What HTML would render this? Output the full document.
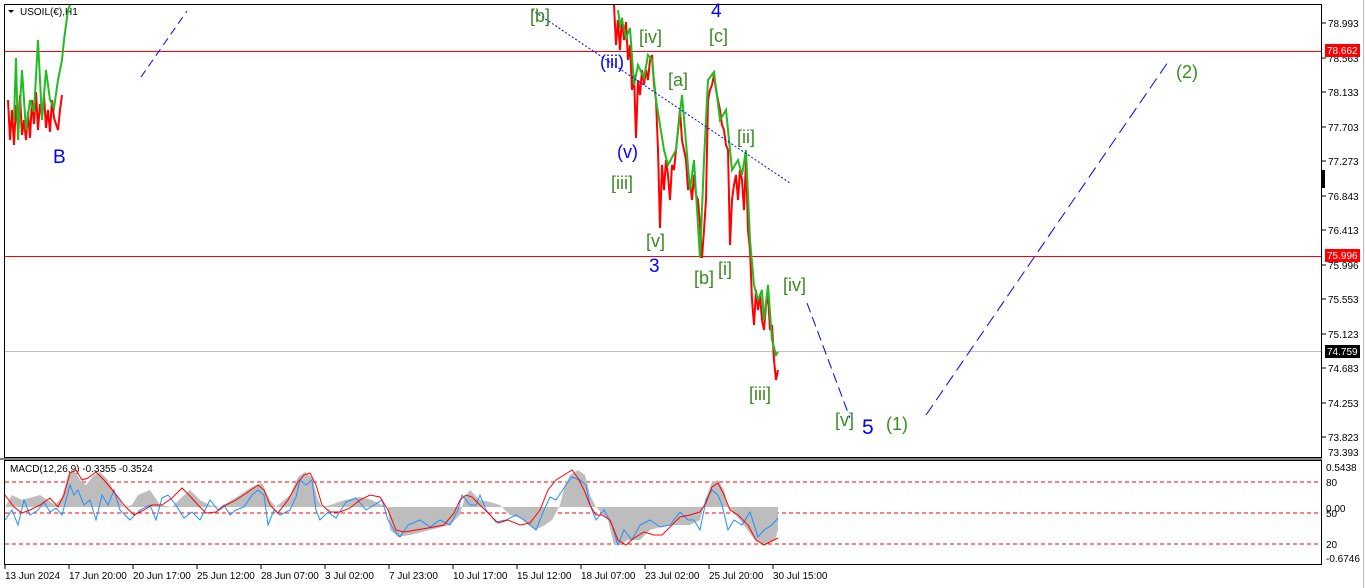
<!DOCTYPE html>
<html><head><meta charset="utf-8"><style>
html,body{margin:0;padding:0;background:#fff;width:1366px;height:588px;overflow:hidden}
svg{display:block;font-family:"Liberation Sans",sans-serif}
.g{fill:#3a8a22;font-size:18px}
.b{fill:#0000ff;font-size:19px}
.ax{font-size:10px;fill:#000}
</style></head><body>
<svg width="1366" height="588" viewBox="0 0 1366 588">
<rect x="0" y="0" width="1366" height="588" fill="#fff"/>
<!-- frames -->
<rect x="4.5" y="4.5" width="1317" height="453" fill="none" stroke="#000"/>
<rect x="4.5" y="460.5" width="1317" height="104" fill="none" stroke="#000"/>
<line x1="0" y1="459" x2="1322" y2="459" stroke="#000"/>
<line x1="1363.5" y1="0" x2="1363.5" y2="588" stroke="#bbb"/>
<!-- horizontal lines -->
<rect x="5" y="51" width="1316" height="1" fill="#ff0000"/>
<rect x="5" y="256" width="1316" height="1" fill="#ff0000"/>
<rect x="5" y="351" width="1316" height="1" fill="#c0c0c0"/>
<!-- price axis ticks & labels -->
<g stroke="#000">
<line x1="1322" y1="23" x2="1326" y2="23"/><line x1="1322" y1="58" x2="1326" y2="58"/><line x1="1322" y1="92" x2="1326" y2="92"/><line x1="1322" y1="127" x2="1326" y2="127"/><line x1="1322" y1="161" x2="1326" y2="161"/><line x1="1322" y1="196" x2="1326" y2="196"/><line x1="1322" y1="230" x2="1326" y2="230"/><line x1="1322" y1="265" x2="1326" y2="265"/><line x1="1322" y1="299" x2="1326" y2="299"/><line x1="1322" y1="334" x2="1326" y2="334"/><line x1="1322" y1="368" x2="1326" y2="368"/><line x1="1322" y1="403" x2="1326" y2="403"/><line x1="1322" y1="437" x2="1326" y2="437"/>
</g>
<g class="ax">
<text x="1328" y="27">78.993</text><text x="1328" y="62">78.563</text><text x="1328" y="96">78.133</text><text x="1328" y="131">77.703</text><text x="1328" y="165">77.273</text><text x="1328" y="200">76.843</text><text x="1328" y="234">76.413</text><text x="1328" y="269">75.996</text><text x="1328" y="303">75.553</text><text x="1328" y="338">75.123</text><text x="1328" y="372">74.683</text><text x="1328" y="407">74.253</text><text x="1328" y="441">73.823</text><text x="1328" y="456">73.393</text>
</g>
<rect x="1325" y="44" width="35" height="13" fill="#ff0000"/><text x="1327" y="54" style="fill:#fff;font-size:10px">78.662</text>
<rect x="1325" y="249" width="35" height="13" fill="#ff0000"/><text x="1327" y="259" style="fill:#fff;font-size:10px">75.996</text>
<rect x="1325" y="345" width="35" height="13" fill="#000"/><text x="1327" y="355" style="fill:#fff;font-size:10px">74.759</text>
<rect x="1322" y="170" width="3" height="18" fill="#000"/>
<!-- MACD axis -->
<g style="font-size:10px">
<text x="1326" y="471">0.5438</text><text x="1326" y="486">80</text><text x="1326" y="512">0.00</text><text x="1326" y="517">50</text><text x="1326" y="548">20</text><text x="1326" y="562">-0.6746</text>
</g>
<!-- title -->
<path d="M8 10 L14 10 L11 13 Z" fill="#000"/>
<text x="20" y="15" style="font-size:10px">USOIL(€),H1</text>
<!-- left candles -->
<g stroke-width="2" fill="none">
<polyline stroke="#ff0000" points="8,100 10,140 12,110 14,145 16,105 18,130 20,95 22,135 24,120 26,140 28,112 30,138 32,100 34,124 36,92 38,130 40,104 42,116 44,95 46,128 48,110 50,132 52,100 54,118 56,124 58,130 60,110 62,95"/>
<polyline stroke="#22bb22" points="14,120 16,58 18,140 22,70 26,130 30,100 34,112 38,40 42,120 46,70 50,100 54,108 58,80 62,60 64,40 66,25 68,10 70,5"/>
</g>
<!-- main candles -->
<g stroke-width="2" fill="none">
<polyline stroke="#ff0000" points="614,5 616,45 618,20 620,50 622,18 624,40 626,22 628,60 630,45 632,90 634,75 636,138 638,80 640,95 642,70 644,85 646,70 648,80 650,60 652,55 654,85 656,100 658,150 660,228 662,165 664,190 666,160 668,175 670,200 672,165 674,170 676,150 678,130 680,110 682,140 684,150 686,160 688,190 690,180 692,200 694,175 696,195 698,200 700,225 702,258 704,230 706,200 708,100 710,90 712,85 714,75 716,90 718,100 720,110 722,125 724,130 726,145 728,150 730,245 732,200 734,185 736,175 738,200 740,170 742,180 744,210 746,160 748,230 750,250 752,300 754,325 756,290 758,310 760,295 762,320 764,330 766,305 768,295 770,330 772,325 774,360 776,380 778,370"/>
<polyline stroke="#22bb22" points="618,10 620,25 622,20 626,38 630,28 634,85 638,65 644,78 648,55 652,60 656,100 664,150 668,165 676,150 682,95 690,190 694,160 700,258 704,160 708,80 714,72 720,120 726,110 732,170 738,160 742,175 746,150 750,240 754,285 758,300 762,290 764,320 768,285 772,340 776,355 778,352"/>
</g>
<!-- blue dashed lines -->
<g stroke="#0000ff" stroke-width="1" fill="none">
<line x1="141" y1="77" x2="187" y2="11" stroke-dasharray="8,5"/>
<line x1="532" y1="10" x2="790" y2="183" stroke-dasharray="2,2"/>
<line x1="807" y1="303" x2="850" y2="418" stroke-dasharray="10,5"/>
<line x1="926" y1="415" x2="1168" y2="62" stroke-dasharray="12,6"/>
</g>
<!-- labels -->
<text x="53" y="163" class="b">B</text>
<text x="530" y="22" class="g">[b]</text>
<text x="711" y="17" class="b">4</text>
<text x="639" y="43" class="g">[iv]</text>
<text x="709" y="42" class="g">[c]</text>
<text x="600" y="68" class="b" style="font-size:18px">(iii)</text>
<text x="668" y="86" class="g">[a]</text>
<text x="737" y="143" class="g">[ii]</text>
<text x="617" y="158" class="b" style="font-size:18px">(v)</text>
<text x="611" y="189" class="g">[iii]</text>
<text x="646" y="247" class="g">[v]</text>
<text x="649" y="272" class="b">3</text>
<text x="694" y="284" class="g">[b]</text>
<text x="718" y="275" class="g">[i]</text>
<text x="783" y="291" class="g">[iv]</text>
<text x="749" y="400" class="g">[iii]</text>
<text x="835" y="426" class="g">[v]</text>
<text x="862" y="434" class="b" style="font-size:21px">5</text>
<text x="886" y="430" class="g">(1)</text>
<text x="1176" y="78" class="g">(2)</text>
<!-- MACD -->
<text x="10" y="472" style="font-size:10px">MACD(12,26,9) -0.3355 -0.3524</text>
<g stroke="#ff0000" stroke-dasharray="4,3" stroke-width="1">
<line x1="5" y1="482" x2="1321" y2="482"/><line x1="5" y1="513" x2="1321" y2="513"/><line x1="5" y1="544" x2="1321" y2="544"/>
</g>
<polygon fill="#bdbdbd" points="5,507 12,495 22,500 40,495 55,505 62,497 68,475 74,470 80,480 86,485 94,475 100,472 108,480 116,495 124,507 132,505 138,495 150,490 160,505 172,507 182,497 190,490 200,500 210,505 220,507 240,495 250,488 262,483 270,500 276,507 290,495 298,477 305,472 312,478 318,500 322,507 330,505 345,500 360,497 372,500 382,505 388,507 390,530 398,537 410,535 430,530 450,525 460,515 462,507 465,497 470,490 480,500 490,502 500,505 505,510 510,515 520,518 535,530 545,525 552,520 560,505 565,485 570,475 578,470 585,475 590,495 596,507 608,520 614,545 620,545 628,540 640,540 650,530 660,527 670,525 690,525 700,520 705,500 712,482 718,480 724,490 728,507 740,520 755,540 765,545 775,540 778,530 778,507 5,507"/>
<polyline fill="none" stroke="#1e90ff" stroke-width="1" points="5,520 12,510 18,525 24,500 30,515 38,510 44,502 50,512 56,508 62,515 66,500 70,485 74,495 78,490 84,505 90,500 96,520 102,495 108,505 114,490 120,510 130,520 140,510 150,505 156,520 162,498 168,495 176,505 184,518 192,512 200,520 210,500 218,510 224,505 230,515 236,510 244,507 252,495 258,490 264,495 268,525 274,510 280,515 290,510 296,497 300,480 306,485 312,480 316,510 320,520 328,512 336,518 346,502 356,498 366,510 374,505 382,500 388,520 394,530 400,537 408,525 420,520 430,527 440,520 450,525 458,510 462,495 470,505 476,505 480,495 486,510 496,522 506,520 516,515 524,520 536,530 544,510 550,497 556,500 566,485 572,477 580,480 586,485 590,505 596,520 604,510 612,525 618,545 624,530 632,540 640,525 650,520 660,527 670,525 680,512 688,520 694,520 700,530 706,500 712,490 718,495 722,505 728,530 734,520 742,525 750,512 758,537 764,530 772,525 778,518"/>
<polyline fill="none" stroke="#ff0000" stroke-width="1" points="5,495 14,507 22,513 30,510 40,505 50,498 58,507 64,495 70,473 76,470 82,480 88,478 96,472 104,480 114,492 124,505 134,515 144,510 152,505 162,505 172,498 182,488 190,496 198,505 206,513 216,512 226,505 236,500 248,492 258,485 264,490 270,505 278,513 288,500 298,482 304,475 310,473 316,485 322,505 330,512 340,512 350,508 360,500 370,495 380,497 388,510 396,530 404,532 416,530 428,528 444,525 454,513 460,500 466,495 472,497 480,505 490,515 498,523 508,520 520,525 530,523 540,510 548,490 556,480 564,475 572,470 578,478 584,490 590,505 596,515 602,515 610,520 618,540 626,545 634,538 644,532 654,535 662,535 670,527 680,517 690,515 700,512 706,503 712,487 718,483 724,495 730,510 738,515 748,525 756,540 764,545 770,542 778,538"/>
<!-- time axis -->
<g stroke="#000"><line x1="5" y1="565" x2="5" y2="569"/><line x1="69" y1="565" x2="69" y2="569"/><line x1="133" y1="565" x2="133" y2="569"/><line x1="197" y1="565" x2="197" y2="569"/><line x1="261" y1="565" x2="261" y2="569"/><line x1="325" y1="565" x2="325" y2="569"/><line x1="389" y1="565" x2="389" y2="569"/><line x1="453" y1="565" x2="453" y2="569"/><line x1="517" y1="565" x2="517" y2="569"/><line x1="581" y1="565" x2="581" y2="569"/><line x1="645" y1="565" x2="645" y2="569"/><line x1="709" y1="565" x2="709" y2="569"/><line x1="773" y1="565" x2="773" y2="569"/></g>
<g style="font-size:10px">
<text x="5" y="579">13 Jun 2024</text><text x="69" y="579">17 Jun 20:00</text><text x="133" y="579">20 Jun 17:00</text><text x="197" y="579">25 Jun 12:00</text><text x="261" y="579">28 Jun 07:00</text><text x="325" y="579">3 Jul 02:00</text><text x="389" y="579">7 Jul 23:00</text><text x="453" y="579">10 Jul 17:00</text><text x="517" y="579">15 Jul 12:00</text><text x="581" y="579">18 Jul 07:00</text><text x="645" y="579">23 Jul 02:00</text><text x="709" y="579">25 Jul 20:00</text><text x="773" y="579">30 Jul 15:00</text>
</g>
</svg>
</body></html>
